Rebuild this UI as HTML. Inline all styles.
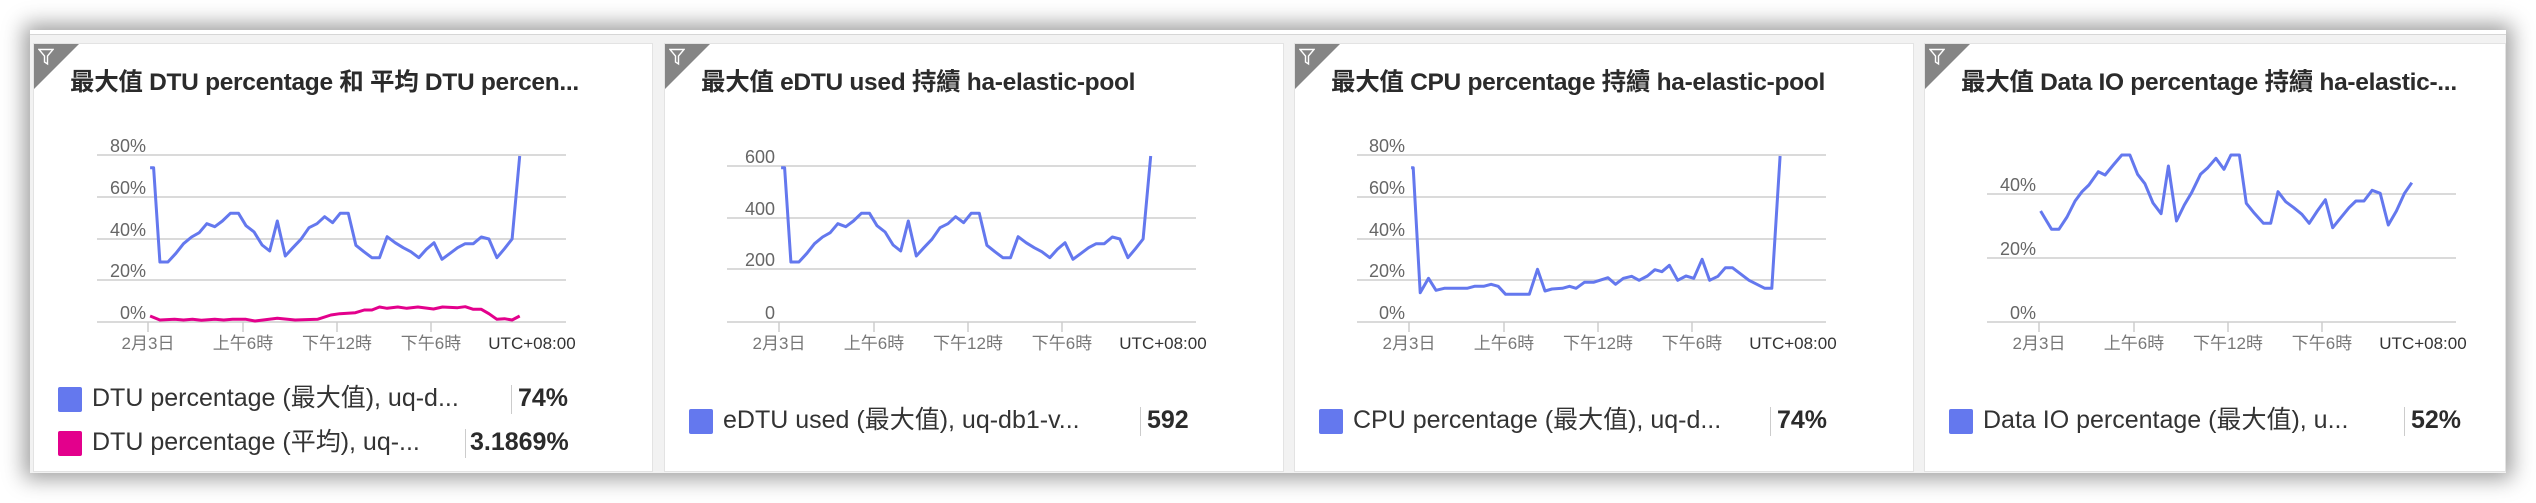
<!DOCTYPE html>
<html><head><meta charset="utf-8"><style>
*{margin:0;padding:0;box-sizing:border-box}
body{width:2536px;height:503px;background:#fff;position:relative;overflow:hidden;font-family:"Liberation Sans","Noto Sans CJK TC",sans-serif}
.outer{position:absolute;left:30px;top:30px;width:2476px;height:443px;background:#f2f2f2;box-shadow:0 0 20px 6px rgba(0,0,0,.38)}
.strip{position:absolute;left:30px;top:30px;width:2476px;height:5px;background:#fff;border-bottom:1px solid #d6d6d6}
.p{position:absolute;top:43px;height:429px;background:#fff;border:1px solid #e3e3e3;overflow:hidden}
.p svg{position:absolute;left:0;top:-43px}
.tri{position:absolute;left:0;top:0;width:0;height:0;border-top:45px solid #858585;border-right:45px solid transparent}
.title{position:absolute;left:36px;top:19px;font-size:24.5px;font-weight:700;color:#2b2b2b;white-space:nowrap;letter-spacing:-0.3px}
.lg{position:absolute;left:24px;height:26px;white-space:nowrap;font-size:25px;color:#333}
.sw{position:absolute;left:0;top:0;width:24px;height:25px;border-radius:2px}
.lt{position:absolute;left:34px;top:-1px;line-height:25px}
.sep{position:absolute;top:-2px;width:1px;height:29px;background:#ccc}
.val{position:absolute;top:-1px;line-height:25px;font-weight:700;color:#2b2b2b}
</style></head><body>
<div class="outer"></div><div class="strip"></div>

<!-- Panel 1 -->
<div class="p" style="left:33px;width:620px">
<svg width="620" height="503" font-family="Liberation Sans, Noto Sans CJK TC, sans-serif">
<g stroke="#cdcdcd" stroke-width="1.5"><line x1="63" y1="154" x2="532" y2="154"/><line x1="63" y1="196" x2="532" y2="196"/><line x1="63" y1="238" x2="532" y2="238"/><line x1="63" y1="279" x2="532" y2="279"/><line x1="63" y1="321" x2="532" y2="321"/>
<line x1="114" y1="321" x2="114" y2="331"/><line x1="209" y1="321" x2="209" y2="331"/><line x1="303" y1="321" x2="303" y2="331"/><line x1="397" y1="321" x2="397" y2="331"/></g>
<g font-size="18" fill="#666" text-anchor="end"><text x="112" y="151">80%</text><text x="112" y="193">60%</text><text x="112" y="235">40%</text><text x="112" y="276">20%</text><text x="112" y="318">0%</text></g>
<g font-size="17" fill="#777" text-anchor="middle"><text x="114" y="348">2月3日</text><text x="209" y="348">上午6時</text><text x="303" y="348">下午12時</text><text x="397" y="348">下午6時</text><text x="498" y="348" fill="#333">UTC+08:00</text></g>
<polyline fill="none" stroke="#6478ee" stroke-width="3" stroke-linejoin="round" points="116.1,166.7 119.6,166.7 125.9,261 133.9,261 141.9,252.3 149.5,242.7 157.6,236 165.2,231.7 172.8,222.7 180.8,225.7 188.4,220 196.4,212.3 204.5,212.3 212,224.7 220.1,231 228.1,244 235.7,250 243.3,220 251.3,255 258.9,246.7 266.9,238.3 275,226.7 283,222.7 290.6,215.7 298.6,221.7 306.2,212.3 314.3,212.3 321.9,244.3 329.9,250.7 337.9,256.7 345.5,256.7 353.1,235.7 361.1,241.7 369.2,246.7 376.8,250.7 384.8,256.7 392.4,248.3 400,241.7 408,258.3 416.1,252.3 423.6,246.7 431.2,242.7 439.3,242.7 447.3,236 454.9,238 462.9,256.7 470.5,247.7 478.1,238 485.7,155"/>
<polyline fill="none" stroke="#e3008c" stroke-width="3" stroke-linejoin="round" points="116.1,315 125.9,319 140.6,318.3 149.5,319 158.5,318.3 167.4,319.3 180.8,318.3 189.7,319 198.6,318.3 212,318.3 221,320 243.3,317.3 261.1,319 283.5,318.3 296.9,314 305.8,312.7 321.4,311.7 330.3,309 337.9,309 345.5,306 353.1,307.3 363.8,306 372.8,307.3 383.9,306 399.5,308 408.5,306 423.6,306.7 431.2,305.7 439.3,308.3 447.3,308.3 454.9,312.7 462.9,318.3 470.5,317.7 478.1,319 485.7,315"/>
</svg>
<div class="tri"></div>
<svg width="16" height="18" style="position:absolute;left:4px;top:4px" viewBox="0 0 16 18"><path d="M1 1.5H15L9.5 8V16L6.5 14V8Z" fill="none" stroke="#fff" stroke-width="1.4"/></svg>
<div class="title">最大值 DTU percentage 和 平均 DTU percen...</div>
<div class="lg" style="top:343px"><div class="sw" style="background:#6478ee"></div><div class="lt">DTU percentage (最大值), uq-d...</div><div class="sep" style="left:453px"></div><div class="val" style="left:460px">74%</div></div>
<div class="lg" style="top:387px"><div class="sw" style="background:#e3008c"></div><div class="lt">DTU percentage (平均), uq-...</div><div class="sep" style="left:407px"></div><div class="val" style="left:412px">3.1869%</div></div>
</div>

<!-- Panel 2 -->
<div class="p" style="left:664px;width:620px">
<svg width="620" height="503" font-family="Liberation Sans, Noto Sans CJK TC, sans-serif">
<g stroke="#cdcdcd" stroke-width="1.5"><line x1="62" y1="165" x2="531" y2="165"/><line x1="62" y1="217" x2="531" y2="217"/><line x1="62" y1="268" x2="531" y2="268"/><line x1="62" y1="321" x2="531" y2="321"/>
<line x1="114" y1="321" x2="114" y2="331"/><line x1="209" y1="321" x2="209" y2="331"/><line x1="303" y1="321" x2="303" y2="331"/><line x1="397" y1="321" x2="397" y2="331"/></g>
<g font-size="18" fill="#666" text-anchor="end"><text x="110" y="162">600</text><text x="110" y="214">400</text><text x="110" y="265">200</text><text x="110" y="318">0</text></g>
<g font-size="17" fill="#777" text-anchor="middle"><text x="114" y="348">2月3日</text><text x="209" y="348">上午6時</text><text x="303" y="348">下午12時</text><text x="397" y="348">下午6時</text><text x="498" y="348" fill="#333">UTC+08:00</text></g>
<polyline fill="none" stroke="#6478ee" stroke-width="3" stroke-linejoin="round" points="116.1,166.7 119.6,166.7 125.9,261 133.9,261 141.9,252.3 149.5,242.7 157.6,236 165.2,231.7 172.8,222.7 180.8,225.7 188.4,220 196.4,212.3 204.5,212.3 212,224.7 220.1,231 228.1,244 235.7,250 243.3,220 251.3,255 258.9,246.7 266.9,238.3 275,226.7 283,222.7 290.6,215.7 298.6,221.7 306.2,212.3 314.3,212.3 321.9,244.3 329.9,250.7 337.9,256.7 345.5,256.7 353.1,235.7 361.1,241.7 369.2,246.7 376.8,250.7 384.8,256.7 392.4,248.3 400,241.7 408,258.3 416.1,252.3 423.6,246.7 431.2,242.7 439.3,242.7 447.3,236 454.9,238 462.9,256.7 470.5,247.7 478.1,238 485.7,155"/>
</svg>
<div class="tri"></div>
<svg width="16" height="18" style="position:absolute;left:4px;top:4px" viewBox="0 0 16 18"><path d="M1 1.5H15L9.5 8V16L6.5 14V8Z" fill="none" stroke="#fff" stroke-width="1.4"/></svg>
<div class="title">最大值 eDTU used 持續 ha-elastic-pool</div>
<div class="lg" style="top:365px"><div class="sw" style="background:#6478ee"></div><div class="lt">eDTU used (最大值), uq-db1-v...</div><div class="sep" style="left:451px"></div><div class="val" style="left:458px">592</div></div>
</div>

<!-- Panel 3 -->
<div class="p" style="left:1294px;width:620px">
<svg width="620" height="503" font-family="Liberation Sans, Noto Sans CJK TC, sans-serif">
<g stroke="#cdcdcd" stroke-width="1.5"><line x1="62" y1="154" x2="531" y2="154"/><line x1="62" y1="196" x2="531" y2="196"/><line x1="62" y1="238" x2="531" y2="238"/><line x1="62" y1="279" x2="531" y2="279"/><line x1="62" y1="321" x2="531" y2="321"/>
<line x1="114" y1="321" x2="114" y2="331"/><line x1="209" y1="321" x2="209" y2="331"/><line x1="303" y1="321" x2="303" y2="331"/><line x1="397" y1="321" x2="397" y2="331"/></g>
<g font-size="18" fill="#666" text-anchor="end"><text x="110" y="151">80%</text><text x="110" y="193">60%</text><text x="110" y="235">40%</text><text x="110" y="276">20%</text><text x="110" y="318">0%</text></g>
<g font-size="17" fill="#777" text-anchor="middle"><text x="114" y="348">2月3日</text><text x="209" y="348">上午6時</text><text x="303" y="348">下午12時</text><text x="397" y="348">下午6時</text><text x="498" y="348" fill="#333">UTC+08:00</text></g>
<polyline fill="none" stroke="#6478ee" stroke-width="3" stroke-linejoin="round" points="116.1,166.7 118.2,166.7 125.2,291.7 133.5,277.3 141,289.3 149.3,287.3 172.1,287.3 179.5,285.3 188.6,285.3 196.1,283.3 203.2,285.3 210.6,293.3 234.3,293.3 242.5,268.3 250,290 257,288 267.4,287.3 274.5,285.3 281.1,287.3 289.4,281.3 298.5,281.3 313,276.7 320.5,283.3 328.4,277.3 336.7,275.3 344.1,279.3 352.4,275 359.9,268.7 366.9,270.7 374.4,264.3 382.7,279.3 391,275 398.8,277.3 407.1,258.3 414.6,279.3 422.9,275.3 430.4,266.7 437.4,266.7 454,279.3 469.8,287.3 476.8,287.3 485.1,155"/>
</svg>
<div class="tri"></div>
<svg width="16" height="18" style="position:absolute;left:4px;top:4px" viewBox="0 0 16 18"><path d="M1 1.5H15L9.5 8V16L6.5 14V8Z" fill="none" stroke="#fff" stroke-width="1.4"/></svg>
<div class="title">最大值 CPU percentage 持續 ha-elastic-pool</div>
<div class="lg" style="top:365px"><div class="sw" style="background:#6478ee"></div><div class="lt">CPU percentage (最大值), uq-d...</div><div class="sep" style="left:451px"></div><div class="val" style="left:458px">74%</div></div>
</div>

<!-- Panel 4 -->
<div class="p" style="left:1924px;width:582px">
<svg width="582" height="503" font-family="Liberation Sans, Noto Sans CJK TC, sans-serif">
<g stroke="#cdcdcd" stroke-width="1.5"><line x1="62" y1="193" x2="531" y2="193"/><line x1="62" y1="257" x2="531" y2="257"/><line x1="62" y1="321" x2="531" y2="321"/>
<line x1="114" y1="321" x2="114" y2="331"/><line x1="209" y1="321" x2="209" y2="331"/><line x1="303" y1="321" x2="303" y2="331"/><line x1="397" y1="321" x2="397" y2="331"/></g>
<g font-size="18" fill="#666" text-anchor="end"><text x="111" y="190">40%</text><text x="111" y="254">20%</text><text x="111" y="318">0%</text></g>
<g font-size="17" fill="#777" text-anchor="middle"><text x="114" y="348">2月3日</text><text x="209" y="348">上午6時</text><text x="303" y="348">下午12時</text><text x="397" y="348">下午6時</text><text x="498" y="348" fill="#333">UTC+08:00</text></g>
<polyline fill="none" stroke="#6478ee" stroke-width="3" stroke-linejoin="round" points="115.6,210 126.6,228.3 133.9,228.3 142,216 150.1,200 157,190.7 163.9,184 173.3,170.7 180.1,174 188.3,164 196.8,154 204.9,154 212.6,173.3 219.9,182.7 228,202 236.1,212.7 243.4,165 251.5,220 259.3,204 266.6,191.7 275.5,173.3 282.8,166.7 290.9,157.3 299,168.3 305.9,154 314.4,154 321.3,202.3 329.4,212.3 338.4,222.3 345.7,222.3 353,190.7 360.7,200.7 368.8,206.7 376.9,213.3 384.2,222.3 392.3,210 400.4,198.7 407.7,226.7 415.8,216.7 424,206.7 430.9,200 439,200 447.1,189.3 455.2,192.3 463.3,224 471.4,210 479.5,192.3 486.8,181.7"/>
</svg>
<div class="tri"></div>
<svg width="16" height="18" style="position:absolute;left:4px;top:4px" viewBox="0 0 16 18"><path d="M1 1.5H15L9.5 8V16L6.5 14V8Z" fill="none" stroke="#fff" stroke-width="1.4"/></svg>
<div class="title">最大值 Data IO percentage 持續 ha-elastic-...</div>
<div class="lg" style="top:365px"><div class="sw" style="background:#6478ee"></div><div class="lt">Data IO percentage (最大值), u...</div><div class="sep" style="left:455px"></div><div class="val" style="left:462px">52%</div></div>
</div>
</body></html>
